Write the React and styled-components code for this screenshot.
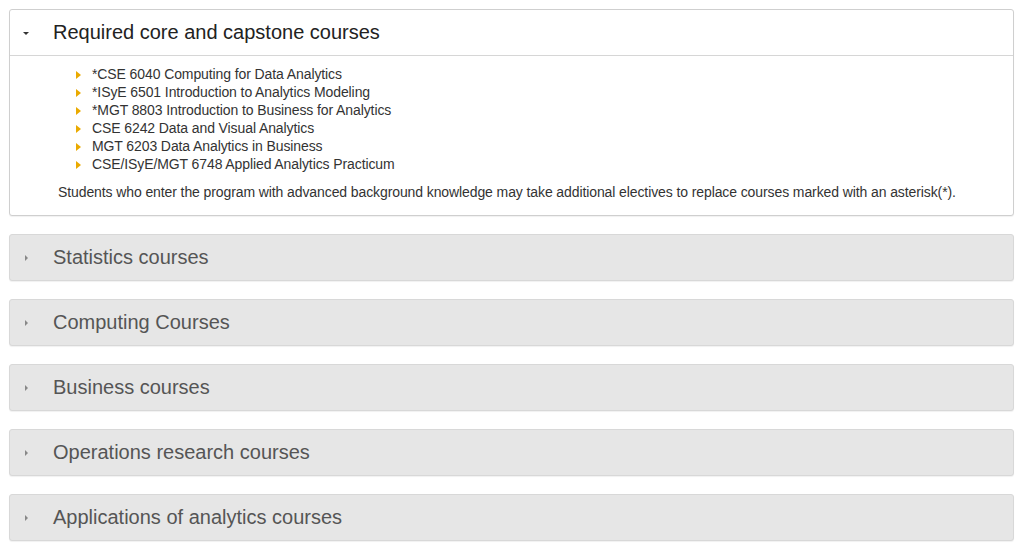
import React from "react";
import styled, { createGlobalStyle } from "styled-components";

const GlobalStyle = createGlobalStyle`
  body {
    margin: 0;
    background: #fff;
    font-family: "Liberation Sans", Arial, sans-serif;
  }
`;

const Page = styled.div`
  display: flex;
  flex-direction: column;
  gap: 18px;
  padding: 9px 10px 9px 9px;
`;

const Panel = styled.div`
  border: 1px solid ${(p) => (p.open ? "#cfcfcf" : "#d8d8d8")};
  border-radius: 3px;
  background: ${(p) => (p.open ? "#fff" : "#e6e6e6")};
  box-shadow: 0 1px 1px rgba(0, 0, 0, 0.06);
`;

const Header = styled.div`
  display: flex;
  align-items: center;
  height: 45px;
  padding-left: 13px;
  border-bottom: ${(p) => (p.open ? "1px solid #d6d6d6" : "none")};
  cursor: pointer;
`;

const Caret = styled.span`
  width: 0;
  height: 0;
  ${(p) =>
    p.open
      ? `
    border-left: 3px solid transparent;
    border-right: 3px solid transparent;
    border-top: 3px solid #333;
    margin-right: 24px;
    margin-top: 2px;
  `
      : `
    border-top: 3px solid transparent;
    border-bottom: 3px solid transparent;
    border-left: 3px solid #888;
    margin-left: 2px;
    margin-right: 25px;
  `}
`;

const Title = styled.h3`
  margin: 0;
  font-size: 20px;
  font-weight: 400;
  color: ${(p) => (p.open ? "#222" : "#555")};
`;

const Body = styled.div`
  padding: 9px 15px 14px 48px;
  font-size: 14px;
  line-height: 18px;
  letter-spacing: -0.1px;
  color: #333;
`;

const List = styled.ul`
  list-style: none;
  margin: 0 0 10px;
  padding: 0 0 0 34px;
`;

const Item = styled.li`
  position: relative;
  &::before {
    content: "";
    position: absolute;
    left: -16px;
    top: 6px;
    border-top: 4px solid transparent;
    border-bottom: 4px solid transparent;
    border-left: 5px solid #eaaa00;
  }
`;

const Note = styled.p`
  margin: 0;
`;

const courses = [
  "*CSE 6040 Computing for Data Analytics",
  "*ISyE 6501 Introduction to Analytics Modeling",
  "*MGT 8803 Introduction to Business for Analytics",
  "CSE 6242 Data and Visual Analytics",
  "MGT 6203 Data Analytics in Business",
  "CSE/ISyE/MGT 6748 Applied Analytics Practicum",
];

const closed = [
  "Statistics courses",
  "Computing Courses",
  "Business courses",
  "Operations research courses",
  "Applications of analytics courses",
];

export default function App() {
  return (
    <>
      <GlobalStyle />
      <Page>
        <Panel open>
          <Header open>
            <Caret open />
            <Title open>Required core and capstone courses</Title>
          </Header>
          <Body>
            <List>
              {courses.map((c) => (
                <Item key={c}>{c}</Item>
              ))}
            </List>
            <Note>
              Students who enter the program with advanced background knowledge may take additional
              electives to replace courses marked with an asterisk(*).
            </Note>
          </Body>
        </Panel>
        {closed.map((t) => (
          <Panel key={t}>
            <Header>
              <Caret />
              <Title>{t}</Title>
            </Header>
          </Panel>
        ))}
      </Page>
    </>
  );
}
